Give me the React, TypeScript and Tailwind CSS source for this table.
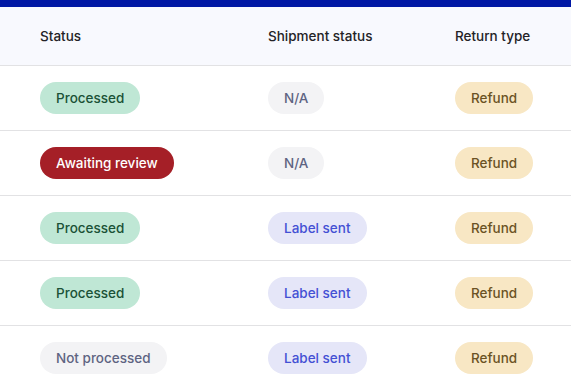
const rows = [
  { status: "Processed", shipment: "N/A" },
  { status: "Awaiting review", shipment: "N/A" },
  { status: "Processed", shipment: "Label sent" },
  { status: "Processed", shipment: "Label sent" },
  { status: "Not processed", shipment: "Label sent" },
];

const statusStyle: Record<string, string> = {
  Processed: "bg-[#bfe7d5] text-[#1b5237]",
  "Awaiting review": "bg-[#a51f27] text-white",
  "Not processed": "bg-[#f3f3f5] text-[#5e6482]",
};

const shipmentStyle: Record<string, string> = {
  "N/A": "bg-[#f3f3f5] text-[#5e6482]",
  "Label sent": "bg-[#e5e6f8] text-[#4350d4]",
};

const Badge = ({ label, className }: { label: string; className: string }) => (
  <span
    className={`inline-flex h-8 items-center rounded-full px-4 text-[13.5px] font-medium whitespace-nowrap ${className}`}
  >
    {label}
  </span>
);

export default function App() {
  return (
    <div className="w-[571px] h-[390px] overflow-hidden bg-white font-['Inter',sans-serif]">
      <div className="h-[7px] bg-[#0017a4]" />
      <div className="grid h-[59px] grid-cols-[228px_187px_1fr] items-center border-b border-[#e2e2e4] bg-[#f8f9fe] pl-10 text-[13.5px] font-medium text-[#232326]">
        <div>Status</div>
        <div>Shipment status</div>
        <div>Return type</div>
      </div>
      {rows.map((row, i) => (
        <div
          key={i}
          className="grid h-[65px] grid-cols-[228px_187px_1fr] items-center border-b border-[#e2e2e4] pl-10"
        >
          <div>
            <Badge label={row.status} className={statusStyle[row.status]} />
          </div>
          <div>
            <Badge label={row.shipment} className={shipmentStyle[row.shipment]} />
          </div>
          <div>
            <Badge label="Refund" className="bg-[#f8e7c4] text-[#6b5324]" />
          </div>
        </div>
      ))}
    </div>
  );
}
